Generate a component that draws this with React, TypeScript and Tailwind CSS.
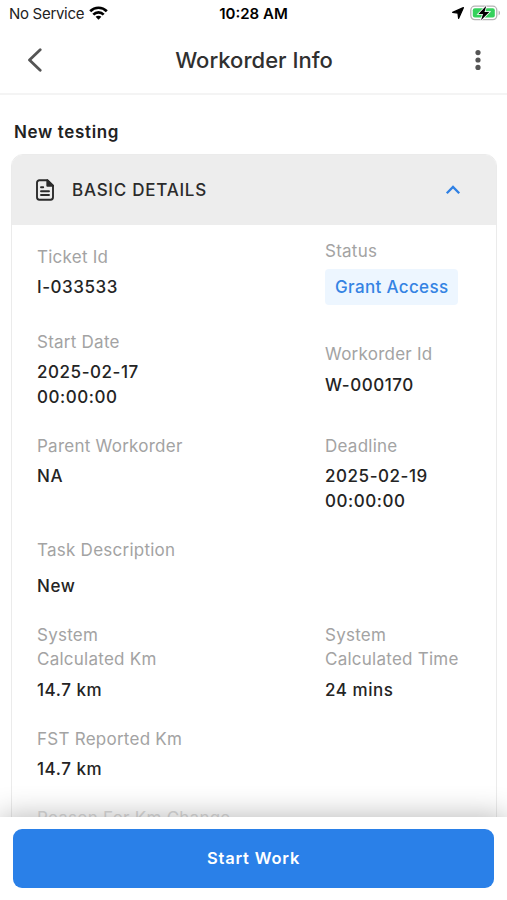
import React, { useState } from "react";
import clsx from "clsx";

// --- DATA: WORKORDER ---
type Field = {
  label: string;
  lines: string[];
  badge?: boolean;
  centered?: boolean;
  wide?: boolean;
  faded?: boolean;
};

const ROWS: Field[][] = [
  [
    { label: "Ticket Id", lines: ["I-033533"], centered: true },
    { label: "Status", lines: ["Grant Access"], badge: true },
  ],
  [
    { label: "Start Date", lines: ["2025-02-17", "00:00:00"] },
    { label: "Workorder Id", lines: ["W-000170"], centered: true },
  ],
  [
    { label: "Parent Workorder", lines: ["NA"] },
    { label: "Deadline", lines: ["2025-02-19", "00:00:00"] },
  ],
  [{ label: "Task Description", lines: ["New"], wide: true }],
  [
    { label: "System Calculated Km", lines: ["14.7 km"] },
    { label: "System Calculated Time", lines: ["24 mins"] },
  ],
  [{ label: "FST Reported Km", lines: ["14.7 km"] }],
  [{ label: "Reason For Km Change", lines: [], wide: true, faded: true }],
];

function StatusBar() {
  return (
    <div className="grid h-[27px] shrink-0 grid-cols-3 items-center pl-[9px] pr-[6px] text-[15px] leading-none text-black">
      <div className="flex items-center gap-[5px]">
        <span className="text-[#222] tracking-[-0.3px]">No Service</span>
        <svg width="19" height="14" viewBox="0 0 19 14" fill="none" stroke="#000" strokeWidth="2.7" className="-mt-[2px]">
          <path d="M1.2 5.2C5.8 .6 13.2 .6 17.8 5.2" />
          <path d="M4.3 8.6C7.2 5.7 11.8 5.7 14.7 8.6" />
          <path d="M9.5 13.8 6.6 10.8C8.2 9.3 10.8 9.3 12.4 10.8Z" fill="#000" stroke="none" />
        </svg>
      </div>
      <span className="-ml-[3px] text-center font-semibold">10:28 AM</span>
      <div className="-mt-[1px] flex items-center justify-end gap-[6px]">
        <svg width="12" height="12" viewBox="0 0 11 11">
          <path d="M10.4.6 6.1 10.4 5.5 5.6.6 5Z" fill="#000" stroke="#000" strokeWidth="1.2" strokeLinejoin="round" />
        </svg>
        <svg width="31" height="16" viewBox="0 0 31 16">
          <rect x=".8" y="1.2" width="26" height="13.4" rx="4" fill="#fff" stroke="#b4b4b4" strokeWidth="1.3" />
          <rect x="2.8" y="3.2" width="22" height="9.4" rx="2" fill="#35d15c" />
          <path d="M28.6 5.5v4.8c1.9-.8 1.9-4 0-4.8Z" fill="#b4b4b4" />
          <path d="M16.3.8 8.4 9H13l-2 6.2L19.3 7h-4.8Z" fill="#000" stroke="#fff" strokeWidth="1.6" paintOrder="stroke" />
        </svg>
      </div>
    </div>
  );
}

function FieldItem({ field }: { field: Field }) {
  return (
    <div
      className={clsx(
        "flex flex-col items-start",
        field.wide ? "col-span-2 gap-[12px]" : "max-w-[150px] gap-[6px]",
        field.centered ? "self-center" : "self-start"
      )}
    >
      <span
        className={clsx(
          "tracking-[0.25px]",
          field.faded ? "text-[#dcdcdc]" : "text-[#a3a3a3]"
        )}
      >
        {field.label}
      </span>
      {field.badge ? (
        <span className="-mt-[0.5px] whitespace-nowrap rounded-[4px] bg-[#edf6ff] px-[10px] py-[6px] font-medium tracking-[0.35px] text-[#3483e3]">
          {field.lines[0]}
        </span>
      ) : (
        <div className="font-medium tracking-[0.55px] text-[#242424]">
          {field.lines.map((line) => (
            <div key={line}>{line}</div>
          ))}
        </div>
      )}
    </div>
  );
}

export default function App() {
  const [isOpen, setIsOpen] = useState(true);

  return (
    <div className="flex h-screen w-full flex-col overflow-hidden bg-white font-['Inter',sans-serif]">
      <StatusBar />

      {/* Header */}
      <header className="flex h-[68px] shrink-0 items-center justify-between border-b-2 border-[#f4f4f4] pl-[27px] pr-[23px]">
        <button aria-label="Back">
          <svg width="16" height="24" viewBox="0 0 16 24" fill="none" stroke="#555" strokeWidth="2.8" strokeLinecap="round" strokeLinejoin="round">
            <path d="M13.2 1.8 2.5 12l10.7 10.2" />
          </svg>
        </button>
        <h1 className="-ml-[7px] text-[22px] font-medium tracking-[0.02px] text-[#303030]">Workorder Info</h1>
        <button aria-label="More options">
          <svg width="12" height="24" viewBox="0 0 12 24" fill="#555">
            <circle cx="6" cy="4.6" r="2.6" />
            <circle cx="6" cy="12" r="2.6" />
            <circle cx="6" cy="19.4" r="2.6" />
          </svg>
        </button>
      </header>

      {/* Content */}
      <main className="min-h-0 flex-1 overflow-hidden pl-[11px] pr-[10px] pt-[25px]">
        <h2 className="pl-[3px] text-[17px] font-semibold leading-6 tracking-[0.65px] text-[#222]">New testing</h2>

        <section className="mt-[10px] overflow-hidden rounded-t-[12px] border border-[#ebebeb]">
          <button
            onClick={() => setIsOpen(!isOpen)}
            className="flex h-[70px] w-full items-center bg-[#ededed] pl-[22px] pr-[35px]"
          >
            <svg width="22" height="24" viewBox="0 0 22 24" fill="none" stroke="#2b2b2b" strokeWidth="1.9" strokeLinecap="round" strokeLinejoin="round">
              <path d="M13.3 2.3H5.4a2.4 2.4 0 0 0-2.4 2.4v14.6a2.4 2.4 0 0 0 2.4 2.4h11.2a2.4 2.4 0 0 0 2.4-2.4V7.8Z" />
              <path d="M13.3 2.3v5.5H19Z" fill="#2b2b2b" />
              <path d="M7 9.3h2.2M7 13.2h8M7 17h8" />
            </svg>
            <span className="ml-[16px] pt-[1px] text-[17px] font-medium tracking-[0.75px] text-[#2b2b2b]">BASIC DETAILS</span>
            <svg
              className={clsx("ml-auto", !isOpen && "rotate-180")}
              width="16"
              height="10"
              viewBox="0 0 16 10"
              fill="none"
              stroke="#2f80e4"
              strokeWidth="2.3"
            >
              <path d="M1.8 8.3 8 2l6.2 6.3" />
            </svg>
          </button>

          {isOpen && (
            <div className="flex flex-col gap-[24.6px] px-[25px] pt-[14px] text-[17px] leading-[24.4px]">
              {ROWS.map((row) => (
                <div key={row[0].label} className="grid grid-cols-[288px_1fr]">
                  {row.map((field) => (
                    <FieldItem key={field.label} field={field} />
                  ))}
                </div>
              ))}
            </div>
          )}
        </section>
      </main>

      {/* Footer */}
      <footer className="relative h-[83px] shrink-0 bg-white px-[13px] pt-[12px] shadow-[0_0_30px_rgba(0,0,0,0.3)]">
        <button className="h-[59px] w-full rounded-[9px] bg-[#2a80e8] text-[16.5px] font-semibold tracking-[0.8px] text-white">
          Start Work
        </button>
      </footer>
    </div>
  );
}
